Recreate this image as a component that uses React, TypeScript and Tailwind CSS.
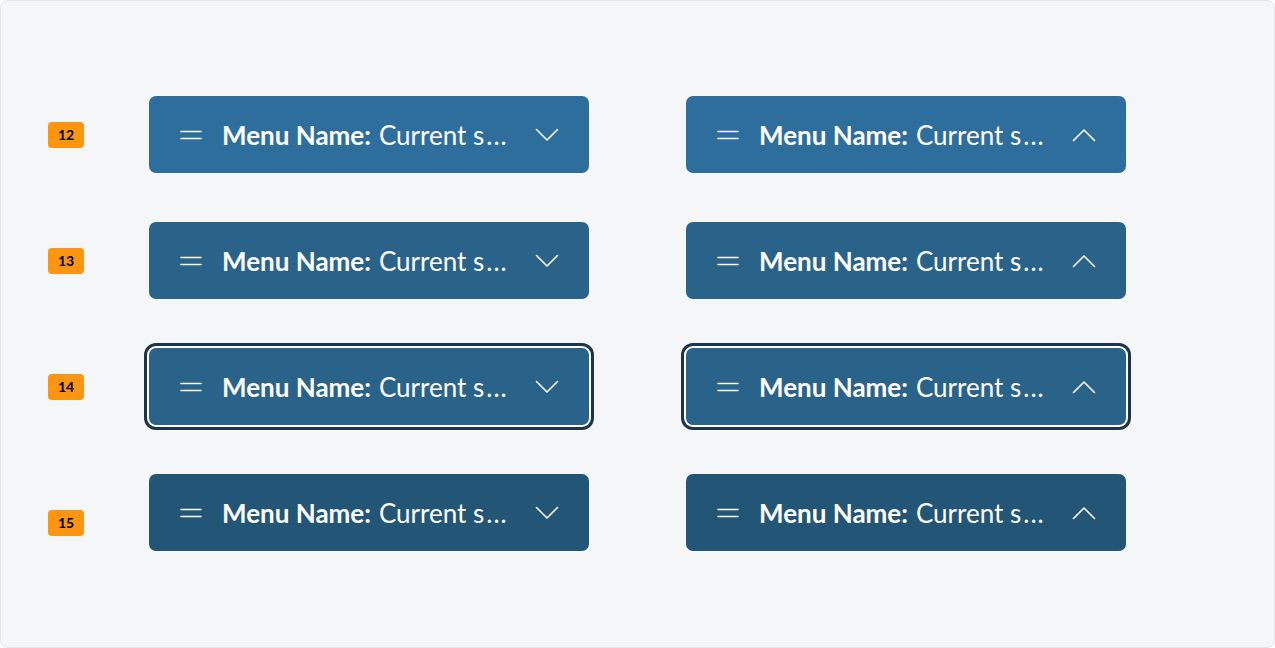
import { type ReactNode } from 'react'

type Variant = 'default' | 'hover' | 'focus' | 'active'

const bg: Record<Variant, string> = {
  default: 'bg-[#2d6e9d]',
  hover: 'bg-[#2a6389]',
  focus: 'bg-[#2a6389] ring-[3px] ring-[#1e3449] ring-offset-2 ring-offset-white',
  active: 'bg-[#235577]',
}

function Hamburger() {
  return (
    <svg width="22" height="10" viewBox="0 0 22 10" fill="none" className="shrink-0">
      <path d="M1 1.5h20M1 8.5h20" stroke="white" strokeWidth="1.6" strokeLinecap="round" />
    </svg>
  )
}

function Chevron({ up }: { up?: boolean }) {
  return (
    <svg width="24" height="14" viewBox="0 0 24 14" fill="none" className="shrink-0">
      <path
        d={up ? 'M1.5 12.5L12 2l10.5 10.5' : 'M1.5 1.5L12 12l10.5-10.5'}
        stroke="white"
        strokeWidth="1.6"
        strokeLinecap="round"
        strokeLinejoin="round"
      />
    </svg>
  )
}

function MenuButton({ variant, up }: { variant: Variant; up?: boolean }) {
  return (
    <button
      type="button"
      className={`flex h-[77px] w-[440px] shrink-0 items-center rounded-[7px] pl-[31px] pr-[30px] text-white ${bg[variant]}`}
    >
      <Hamburger />
      <span className="ml-[20px] flex-1 text-left text-[26px] leading-none whitespace-nowrap">
        <span className="font-bold">Menu Name:</span>
        <span className="ml-[8px]">Current s</span>
        <span className="ml-[2px] tracking-[1px]">...</span>
      </span>
      <Chevron up={up} />
    </button>
  )
}

function Badge({ children, extra = '' }: { children: ReactNode; extra?: string }) {
  return (
    <div
      className={`flex h-[26px] w-[36px] shrink-0 items-center justify-center rounded-[4px] bg-[#fd9510] text-[14px] font-bold text-black ${extra}`}
    >
      {children}
    </div>
  )
}

const rows: { n: string; variant: Variant; badge?: string }[] = [
  { n: '12', variant: 'default' },
  { n: '13', variant: 'hover' },
  { n: '14', variant: 'focus' },
  { n: '15', variant: 'active', badge: 'mt-[20px]' },
]

export default function App() {
  return (
    <div className="h-[648px] w-[1275px] bg-white" style={{ fontFamily: 'Lato, "Open Sans", sans-serif' }}>
      <div className="flex h-full w-full flex-col gap-[49px] rounded-[8px] border border-[#e3e5e8] bg-[#f5f6f8] pt-[95px]">
        {rows.map((r) => (
          <div key={r.n} className="flex items-center pl-[47px]">
            <Badge extra={r.badge}>{r.n}</Badge>
            <div className="ml-[65px]">
              <MenuButton variant={r.variant} />
            </div>
            <div className="ml-[97px]">
              <MenuButton variant={r.variant} up />
            </div>
          </div>
        ))}
      </div>
    </div>
  )
}
